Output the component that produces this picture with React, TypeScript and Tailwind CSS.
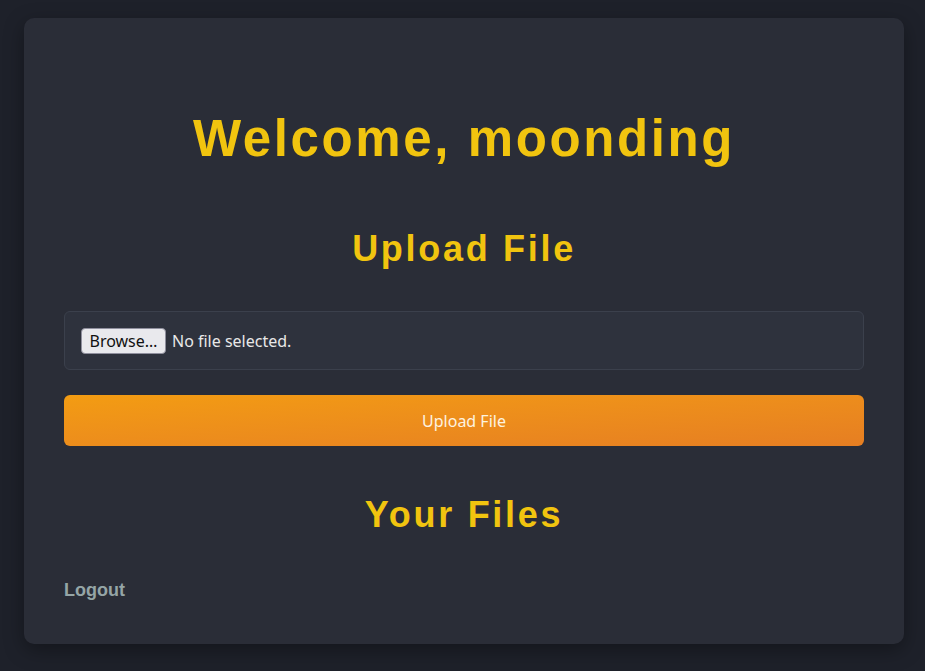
export default function App() {
  return (
    <div className="min-h-[671px] bg-[#1e212a] pt-[18px] pr-[21px] pb-[27px] pl-6 font-['Liberation_Sans',Arial,sans-serif]">
      <div className="rounded-[10px] bg-[#2a2d37] px-10 pt-[90px] pb-[43px] shadow-[0_6px_20px_rgba(0,0,0,0.35)]">
        <h1 className="text-center text-[51px] leading-[61px] font-bold tracking-[2.6px] text-[#f1c40f]">
          Welcome, moonding
        </h1>
        <h2 className="mt-[58px] text-center text-[36px] leading-[43px] font-bold tracking-[2.7px] text-[#f1c40f]">
          Upload File
        </h2>
        <div className="mt-[41px] flex h-[59px] items-center rounded-md border border-[#3b404c] bg-[#2e323d] px-4 font-['Noto_Sans',sans-serif] text-[16px] text-[#e8e8e8]">
          <span className="rounded-[4px] border border-[#8f8f9d] bg-[#e9e9ed] px-[7.5px] py-[1px] leading-[22px] text-[#111]">
            Browse…
          </span>
          <span className="ml-[6px]">No file selected.</span>
        </div>
        <button className="mt-[25px] flex h-[51px] w-full items-center justify-center rounded-md bg-gradient-to-br from-[#f39c12] to-[#e67e22] font-['Noto_Sans',sans-serif] text-[16px] text-[#fdf3e0]">
          Upload File
        </button>
        <h2 className="mt-[47px] text-center text-[36px] leading-[43px] font-bold tracking-[2.7px] text-[#f1c40f]">
          Your Files
        </h2>
        <div className="mt-[43px] text-[18px] leading-[22px] font-bold text-[#95a5a6]">Logout</div>
      </div>
    </div>
  );
}
